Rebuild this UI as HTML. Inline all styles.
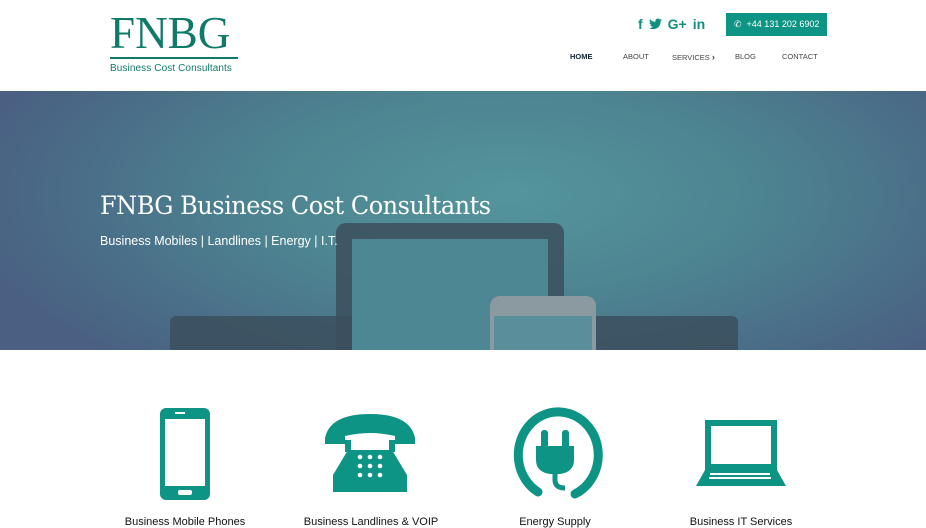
<!DOCTYPE html>
<html><head><meta charset="utf-8"><style>
*{margin:0;padding:0;box-sizing:border-box}
body{width:926px;height:523px;overflow:hidden;background:#fff;font-family:"Liberation Sans",sans-serif;position:relative}
.logo{position:absolute;left:110px;top:12px;color:#0f7a68}
.logo .big{font-family:"Liberation Serif",serif;font-size:46px;line-height:42px;transform:scaleX(.98);transform-origin:left}
.logo .line{width:128px;height:2px;background:#0f7a68;margin-top:3px}
.logo .small{font-size:10px;margin-top:4px;letter-spacing:.1px}
.soc{position:absolute;top:16px;left:638px;color:#10907f;font-weight:bold;font-size:14px;display:flex;align-items:center;gap:6px}
.phone{position:absolute;left:726px;top:13px;width:101px;height:23px;background:#0e9484;color:#fff;font-size:9px;line-height:23px;padding-left:8px}
.nav{position:absolute;top:52px;font-size:7.5px;color:#444}
.hero{position:absolute;left:0;top:91px;width:926px;height:259px;overflow:hidden;
background:radial-gradient(ellipse 60% 90% at 55% 40%,#54959c 0%,#4d8491 45%,#4a6c87 80%,#4a5f82 100%)}
.hero h1{position:absolute;left:100px;top:100px;font-family:"DejaVu Serif","Liberation Serif",serif;font-weight:normal;font-size:25px;color:#fff;letter-spacing:-.5px;transform:scaleX(.96);transform-origin:left}
.hero p{position:absolute;left:100px;top:143px;font-size:12.5px;color:#fff}
.dev{position:absolute;background:#3b4f5d;opacity:.85}
.feat{position:absolute;top:516px;font-size:11px;color:#111;text-align:center;width:200px}
</style></head><body>
<div class="logo"><div class="big">FNBG</div><div class="line"></div><div class="small">Business Cost Consultants</div></div>
<div class="soc"><span>f</span><svg width="13" height="12" viewBox="0 0 24 20" fill="#10907f"><path d="M24 2.4a10 10 0 0 1-2.8.8A5 5 0 0 0 23.3.4a9.800 9.800 0 0 1-3.100 1.200A4.900 4.900 0 0 0 11.800 6 14 14 0 0 1 1.700.9a4.900 4.900 0 0 0 1.500 6.600 4.900 4.900 0 0 1-2.200-.6 4.900 4.900 0 0 0 3.900 4.800 4.900 4.900 0 0 1-2.200.1 4.900 4.900 0 0 0 4.600 3.400A9.900 9.900 0 0 1 0 17.300 14 14 0 0 0 7.500 19.500c9.100 0 14-7.500 14-14v-.6A10 10 0 0 0 24 2.400z"/></svg><span>G+</span><span>in</span></div>
<div class="phone">✆&nbsp;&nbsp;+44 131 202 6902</div>
<div class="nav" style="left:570px;font-weight:bold;color:#123">HOME</div>
<div class="nav" style="left:623px">ABOUT</div>
<div class="nav" style="left:672px">SERVICES <b style="font-size:9px">›</b></div>
<div class="nav" style="left:735px">BLOG</div>
<div class="nav" style="left:782px">CONTACT</div>
<div class="hero">
<div class="dev" style="left:170px;top:225px;width:568px;height:40px;border-radius:6px"></div>
<div class="dev" style="left:336px;top:132px;width:228px;height:140px;border-radius:10px"></div>
<div style="position:absolute;left:352px;top:148px;width:196px;height:120px;background:#4c8793"></div>
<div style="position:absolute;left:490px;top:205px;width:106px;height:60px;background:#8a9aa0;border-radius:10px 10px 0 0"></div>
<div style="position:absolute;left:494px;top:225px;width:98px;height:40px;background:#5a8e9a"></div>
<h1>FNBG Business Cost Consultants</h1>
<p>Business Mobiles | Landlines | Energy | I.T.</p>
</div>
<svg style="position:absolute;left:0;top:400px" width="926" height="110" fill="#0e9484">
<rect x="160" y="8" width="50" height="92" rx="6"/><rect x="165" y="19" width="40" height="67" fill="#fff"/><rect x="178" y="90" width="14" height="5" rx="2" fill="#fff"/><rect x="175" y="12" width="10" height="2" fill="#fff"/>
<path d="M325 38 Q330 14 370 14 Q410 14 415 38 L415 44 L395 44 L395 36 Q370 30 345 36 L345 44 L325 44Z"/>
<rect x="345" y="40" width="6" height="12"/><rect x="389" y="40" width="6" height="12"/>
<path d="M348 50 L392 50 L407 75 L407 92 L333 92 L333 75Z"/>
<g fill="#fff"><circle cx="360" cy="57" r="2.3"/><circle cx="370" cy="57" r="2.3"/><circle cx="380" cy="57" r="2.3"/><circle cx="360" cy="66" r="2.3"/><circle cx="370" cy="66" r="2.3"/><circle cx="380" cy="66" r="2.3"/><circle cx="360" cy="75" r="2.3"/><circle cx="370" cy="75" r="2.3"/><circle cx="380" cy="75" r="2.3"/></g>
<path d="M538 92 A40 43 0 1 1 575 94" fill="none" stroke="#0e9484" stroke-width="9" stroke-linecap="round"/>
<rect x="541" y="30" width="7" height="20" rx="3"/><rect x="562" y="30" width="7" height="20" rx="3"/>
<path d="M536 46 L574 46 L574 60 Q574 72 560 74 L550 74 Q536 72 536 60Z"/><path d="M555 72 L555 80 Q555 88 565 88" fill="none" stroke="#0e9484" stroke-width="5"/>
<rect x="705" y="20" width="72" height="50"/><rect x="711" y="26" width="60" height="38" fill="#fff"/>
<path d="M705 70 L777 70 L786 86 L696 86Z"/><g fill="#fff"><rect x="710" y="73" width="60" height="2"/><rect x="709" y="77" width="62" height="2"/></g>
</svg>
<div class="feat" style="left:85px">Business Mobile Phones</div>
<div class="feat" style="left:271px">Business Landlines &amp; VOIP</div>
<div class="feat" style="left:455px">Energy Supply</div>
<div class="feat" style="left:641px">Business IT Services</div>
</body></html>
